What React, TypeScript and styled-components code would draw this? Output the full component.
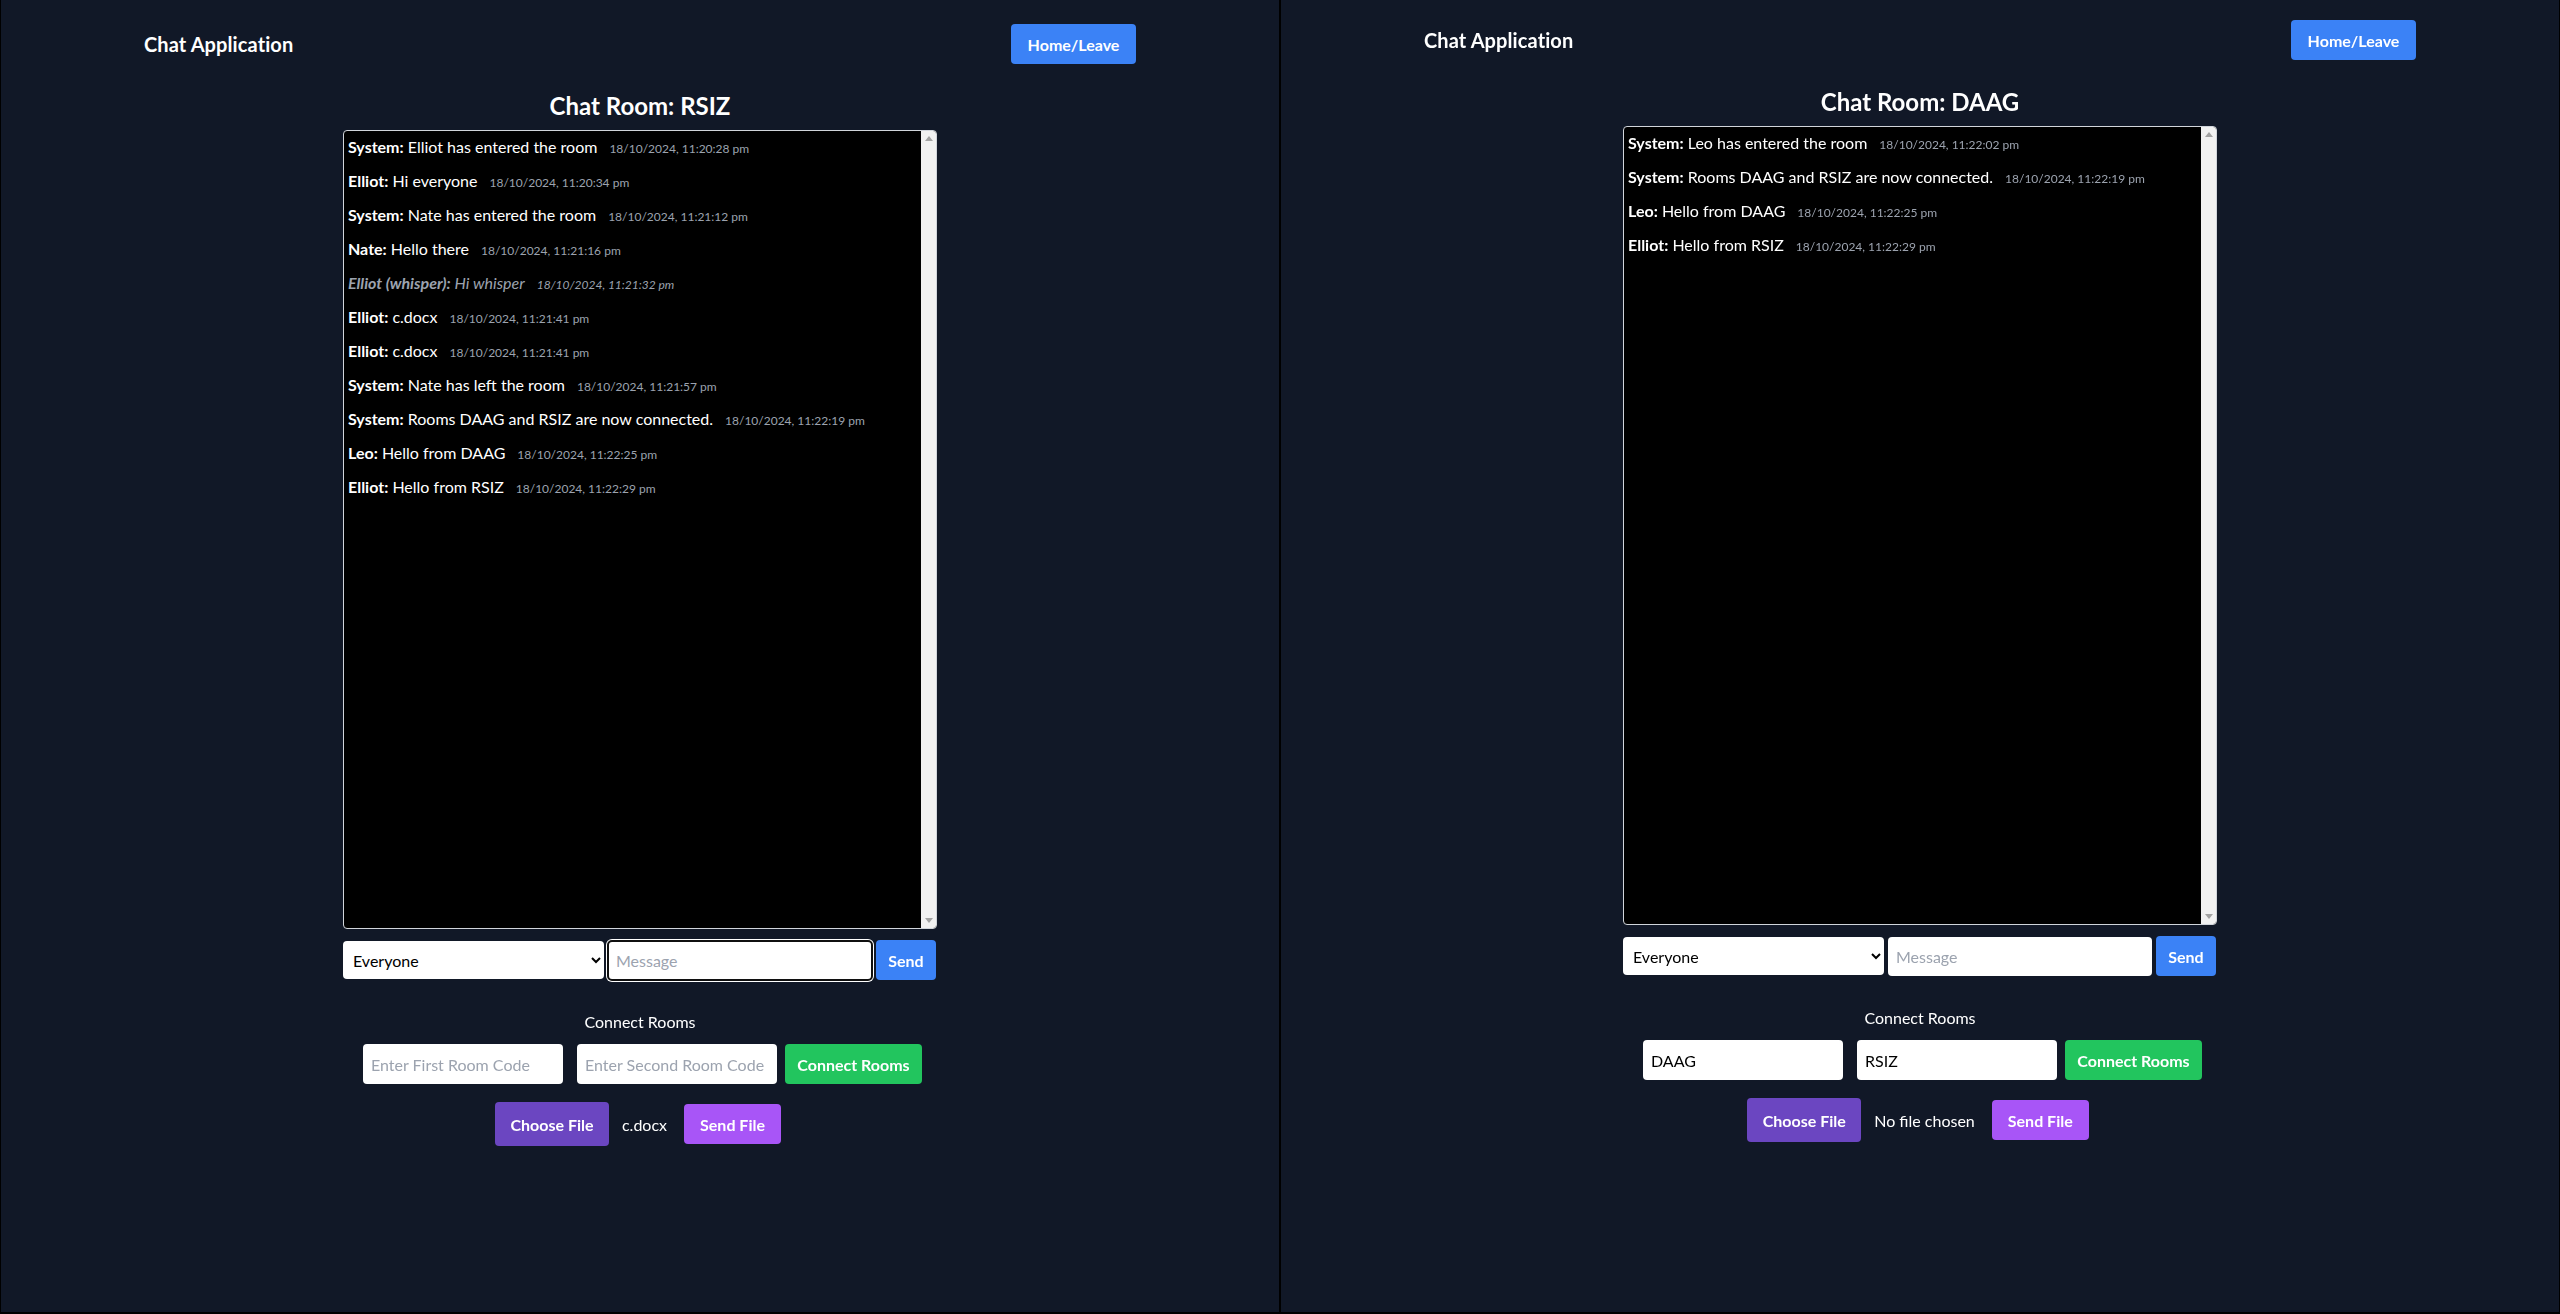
import React from "react";
import styled, { createGlobalStyle } from "styled-components";

const GlobalStyle = createGlobalStyle`
  html, body { margin: 0; padding: 0; background: #111827; }
  body { font-family: "Lato", "Noto Sans", sans-serif; color: #fff; }
  * { box-sizing: border-box; }
`;

const Page = styled.div`
  display: flex;
  width: 2560px;
  height: 1314px;
  overflow: hidden;
`;

const Panel = styled.div<{ $shift: number }>`
  width: 1280px;
  height: 1314px;
  background: #111827;
  border-left: 1px solid #000;
  border-right: 1px solid #000;
  border-bottom: 2px solid #000;
  padding-top: ${(p) => 24 + p.$shift}px;
`;

const Container = styled.div`
  width: 1024px;
  margin: 0 auto;
  padding: 0 16px;
`;

const Header = styled.header`
  display: flex;
  align-items: center;
  justify-content: space-between;
  height: 40px;
  margin-bottom: 24px;
`;

const Brand = styled.div`
  font-size: 20px;
  font-weight: 700;
  letter-spacing: 0.1px;
`;

const Button = styled.button<{ $bg: string; $w: number; $h?: number }>`
  width: ${(p) => p.$w}px;
  height: ${(p) => p.$h ?? 40}px;
  background: ${(p) => p.$bg};
  color: #fff;
  border: none;
  border-radius: 4px;
  font-family: "Lato", "Noto Sans", sans-serif;
  font-size: 16px;
  font-weight: 700;
  padding: 0;
  cursor: pointer;
  flex-shrink: 0;
`;

const Main = styled.main`
  display: flex;
  flex-direction: column;
  align-items: center;
`;

const Title = styled.h1`
  margin: 2px 0 8px;
  font-size: 24px;
  line-height: 32px;
  font-weight: 700;
`;

const ChatBox = styled.div`
  display: flex;
  width: 594px;
  height: 799px;
  background: #000;
  border: 1px solid #d1d5db;
  border-radius: 4px;
  overflow: hidden;
`;

const MessageList = styled.div`
  flex: 1;
  padding: 4px;
  overflow: hidden;
`;

const ScrollTrack = styled.div`
  width: 15px;
  background: #f1f1f1;
  display: flex;
  flex-direction: column;
  justify-content: space-between;
  align-items: center;
  padding: 5px 0;
`;

const Arrow = styled.span<{ $down?: boolean }>`
  width: 0;
  height: 0;
  border-left: 4px solid transparent;
  border-right: 4px solid transparent;
  ${(p) =>
    p.$down ? "border-top: 5px solid #a3a3a3;" : "border-bottom: 5px solid #a3a3a3;"}
`;

const Msg = styled.div<{ $whisper?: boolean }>`
  font-size: 16px;
  line-height: 24px;
  height: 24px;
  margin-bottom: 10px;
  white-space: nowrap;
  color: ${(p) => (p.$whisper ? "#9ca3af" : "#fff")};
  font-style: ${(p) => (p.$whisper ? "italic" : "normal")};
`;

const Name = styled.strong`
  font-weight: 700;
`;

const Stamp = styled.span`
  margin-left: 12px;
  font-size: 12px;
  line-height: 16px;
  color: #9ca3af;
`;

const SendRow = styled.div`
  display: flex;
  align-items: center;
  gap: 4px;
  width: 594px;
  margin-top: 11px;
  height: 40px;
`;

const Select = styled.select`
  width: 261px;
  height: 38px;
  background: #fff;
  color: #000;
  border: none;
  border-radius: 4px;
  padding: 0 6px;
  font-family: "Lato", "Noto Sans", sans-serif;
  font-size: 16px;
`;

const TextInput = styled.input<{ $w: number; $focused?: boolean }>`
  width: ${(p) => p.$w}px;
  height: ${(p) => (p.$w > 220 ? 39 : 40)}px;
  background: #fff;
  color: #000;
  border: none;
  border-radius: 4px;
  padding: 0 8px;
  font-family: "Lato", "Noto Sans", sans-serif;
  font-size: 16px;
  flex-shrink: 0;
  outline: ${(p) => (p.$focused ? "2px solid #101010" : "none")};
  outline-offset: -1px;
  box-shadow: ${(p) => (p.$focused ? "0 0 0 2px #ffffff" : "none")};
  &::placeholder { color: #9ca3af; }
`;

const ConnectLabel = styled.div`
  margin-top: 30px;
  font-size: 16px;
  line-height: 24px;
`;

const ConnectRow = styled.div`
  display: flex;
  align-items: center;
  margin-top: 10px;
  margin-left: 5px;
`;

const Spacer = styled.span<{ $w: number }>`
  display: inline-block;
  width: ${(p) => p.$w}px;
`;

const FileRow = styled.div`
  display: flex;
  align-items: center;
  margin-top: 18px;
  margin-right: 4px;
`;

const FileName = styled.span`
  font-size: 16px;
  margin: 0 17px 0 13px;
`;

type M = { name: string; text: string; time: string; whisper?: boolean };

const leftMsgs: M[] = [
  { name: "System", text: "Elliot has entered the room", time: "18/10/2024, 11:20:28 pm" },
  { name: "Elliot", text: "Hi everyone", time: "18/10/2024, 11:20:34 pm" },
  { name: "System", text: "Nate has entered the room", time: "18/10/2024, 11:21:12 pm" },
  { name: "Nate", text: "Hello there", time: "18/10/2024, 11:21:16 pm" },
  { name: "Elliot (whisper)", text: "Hi whisper", time: "18/10/2024, 11:21:32 pm", whisper: true },
  { name: "Elliot", text: "c.docx", time: "18/10/2024, 11:21:41 pm" },
  { name: "Elliot", text: "c.docx", time: "18/10/2024, 11:21:41 pm" },
  { name: "System", text: "Nate has left the room", time: "18/10/2024, 11:21:57 pm" },
  { name: "System", text: "Rooms DAAG and RSIZ are now connected.", time: "18/10/2024, 11:22:19 pm" },
  { name: "Leo", text: "Hello from DAAG", time: "18/10/2024, 11:22:25 pm" },
  { name: "Elliot", text: "Hello from RSIZ", time: "18/10/2024, 11:22:29 pm" },
];

const rightMsgs: M[] = [
  { name: "System", text: "Leo has entered the room", time: "18/10/2024, 11:22:02 pm" },
  { name: "System", text: "Rooms DAAG and RSIZ are now connected.", time: "18/10/2024, 11:22:19 pm" },
  { name: "Leo", text: "Hello from DAAG", time: "18/10/2024, 11:22:25 pm" },
  { name: "Elliot", text: "Hello from RSIZ", time: "18/10/2024, 11:22:29 pm" },
];

type RoomProps = {
  room: string;
  msgs: M[];
  shift: number;
  focused?: boolean;
  first?: string;
  second?: string;
  fileName: string;
};

const Room: React.FC<RoomProps> = ({ room, msgs, shift, focused, first, second, fileName }) => (
  <Panel $shift={shift}>
    <Container>
      <Header>
        <Brand>Chat Application</Brand>
        <Button $bg="#3b82f6" $w={125}>Home/Leave</Button>
      </Header>
      <Main>
        <Title>Chat Room: {room}</Title>
        <ChatBox>
          <MessageList>
            {msgs.map((m, i) => (
              <Msg key={i} $whisper={m.whisper}>
                <Name>{m.name}:</Name> {m.text}
                <Stamp>{m.time}</Stamp>
              </Msg>
            ))}
          </MessageList>
          <ScrollTrack>
            <Arrow />
            <Arrow $down />
          </ScrollTrack>
        </ChatBox>
        <SendRow>
          <Select defaultValue="everyone">
            <option value="everyone">Everyone</option>
          </Select>
          <TextInput $w={264} $focused={focused} placeholder="Message" autoFocus={focused} />
          <Button $bg="#3b82f6" $w={60}>Send</Button>
        </SendRow>
        <ConnectLabel>Connect Rooms</ConnectLabel>
        <ConnectRow>
          <TextInput $w={200} placeholder="Enter First Room Code" defaultValue={first} />
          <Spacer $w={14} />
          <TextInput $w={200} placeholder="Enter Second Room Code" defaultValue={second} />
          <Spacer $w={8} />
          <Button $bg="#22c55e" $w={137}>Connect Rooms</Button>
        </ConnectRow>
        <FileRow>
          <Button $bg="#6b46c1" $w={114} $h={44}>Choose File</Button>
          <FileName>{fileName}</FileName>
          <Button $bg="#a855f7" $w={97}>Send File</Button>
        </FileRow>
      </Main>
    </Container>
  </Panel>
);

export default function App() {
  return (
    <>
      <GlobalStyle />
      <Page>
        <Room room="RSIZ" msgs={leftMsgs} shift={0} focused fileName="c.docx" />
        <Room room="DAAG" msgs={rightMsgs} shift={-4} first="DAAG" second="RSIZ" fileName="No file chosen" />
      </Page>
    </>
  );
}
